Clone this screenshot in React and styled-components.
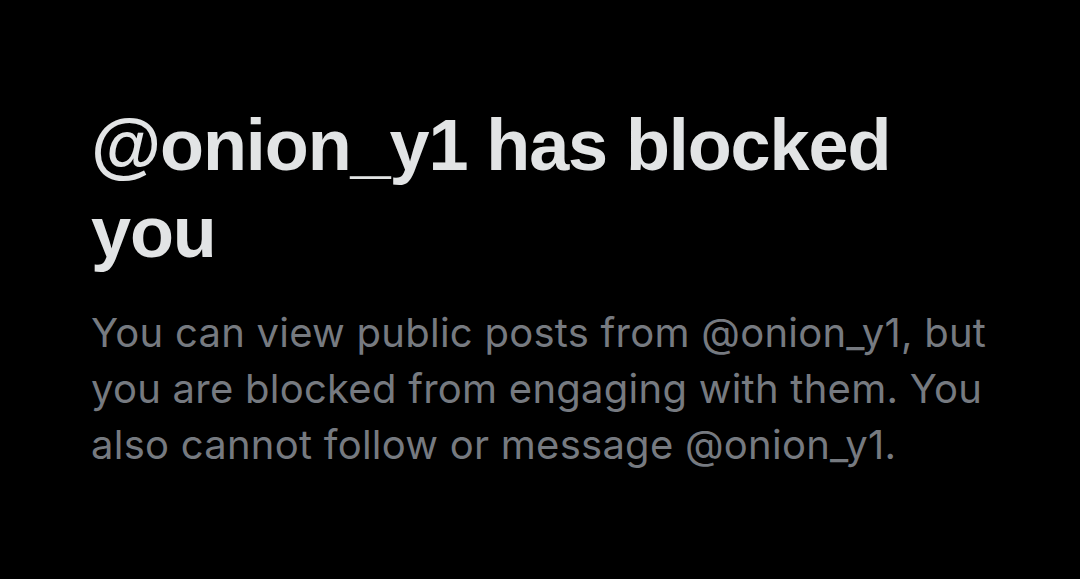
import React from 'react';
import styled, { createGlobalStyle } from 'styled-components';

const GlobalStyle = createGlobalStyle`
  html, body {
    margin: 0;
    padding: 0;
    background: #000;
  }
`;

function App() {
  return (
    <>
      <GlobalStyle />
      <Page>
        <Notice>
          <Title>@onion_y1 has blocked you</Title>
          <Message>
            You can view public posts from @onion_y1, but you are blocked from
            engaging with them. You also cannot follow or message @onion_y1.
          </Message>
        </Notice>
      </Page>
    </>
  );
}

const Page = styled.div`
  width: 1080px;
  height: 579px;
  background: #000;
  box-sizing: border-box;
  padding: 102px 0 0 91px;
  overflow: hidden;
`;

const Notice = styled.div`
  display: flex;
  flex-direction: column;
  gap: 29px;
  max-width: 910px;
`;

const Title = styled.h1`
  margin: 0;
  font-family: 'Liberation Sans', Arial, sans-serif;
  font-weight: 700;
  font-size: 72px;
  line-height: 87px;
  letter-spacing: -1.1px;
  color: #e2e4e5;
`;

const Message = styled.p`
  margin: 0;
  font-family: Inter, 'Liberation Sans', sans-serif;
  font-weight: 400;
  font-size: 40px;
  line-height: 56px;
  letter-spacing: 0.25px;
  color: #767a80;
`;

export default App;
